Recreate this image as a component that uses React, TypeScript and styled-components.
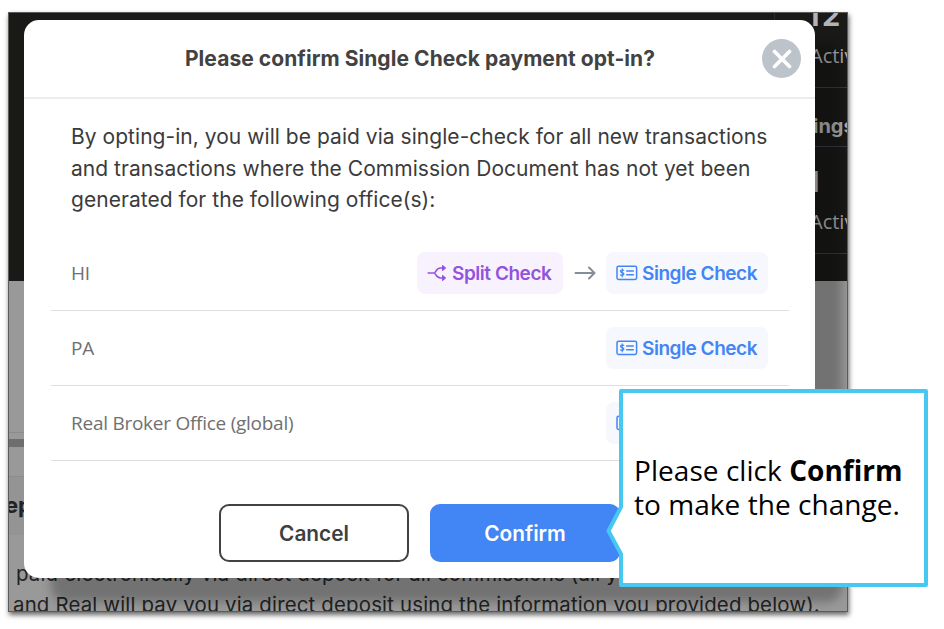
import React from "react";
import styled, { createGlobalStyle } from "styled-components";

const GlobalStyle = createGlobalStyle`
  * { box-sizing: border-box; }
  body { margin: 0; background: #fff; overflow: hidden; }
`;

const Canvas = styled.main`
  position: relative;
  width: 944px;
  height: 629px;
  padding: 12px 0 0 8px;
  overflow: hidden;
  font-family: Inter, "Liberation Sans", sans-serif;
`;

const Frame = styled.section`
  position: relative;
  width: 840px;
  height: 600px;
  border: 1px solid #5b5b59;
  overflow: hidden;
  background: #999;
`;

const FrameShadow = styled.div`
  width: 840px;
  height: 600px;
  box-shadow: 1px 3px 5px rgba(0, 0, 0, 0.6);
`;

const Hero = styled.div`
  display: flex;
  justify-content: flex-end;
  height: 268px;
  background: #191917;
`;

const Stats = styled.div`
  width: 73px;
  border-left: 1px solid #292a2b;
  font-family: "Open Sans", sans-serif;
  color: #b4b4b4;
`;

const StatCell = styled.div<{ $height: number }>`
  height: ${(p) => p.$height}px;
  padding-left: 35px;
  border-bottom: 1px solid #3a3a44;
  overflow: hidden;
  white-space: nowrap;
`;

const StatValue = styled.div<{ $top: number }>`
  margin-top: ${(p) => p.$top}px;
  margin-left: -3px;
  font-family: Inter, sans-serif;
  font-size: 29px;
  line-height: 38px;
  font-weight: 700;
  letter-spacing: 2.6px;
`;

const StatLabel = styled.div`
  padding-top: 4px;
  font-size: 20px;
  line-height: 34px;
`;

const StatHeading = styled.div`
  padding: 21px 0 0 3px;
  font-family: Inter, sans-serif;
  font-size: 20px;
  line-height: 34px;
  font-weight: 700;
`;

const Divider = styled.div<{ $gap: number }>`
  margin-top: ${(p) => p.$gap}px;
  height: 1px;
  background: #8b8b8b;
`;

const ScrollTrack = styled.div`
  margin-top: 6px;
  height: 8px;
  background: #6e6e6e;
`;

const SectionTitle = styled.div`
  height: 58px;
  margin-left: -4px;
  background: #949494;
  font-size: 22px;
  line-height: 57px;
  font-weight: 700;
  color: #222;
`;

const PageCopy = styled.div`
  padding-top: 23px;
  white-space: nowrap;
  font-size: 20.4px;
  line-height: 31px;
  letter-spacing: 0.18px;
  color: #222;
`;

const CopyLine = styled.div<{ $indent: number }>`
  padding-left: ${(p) => p.$indent}px;
`;

const Modal = styled.div`
  position: absolute;
  left: 15px;
  top: 7px;
  width: 791px;
  height: 557.5px;
  border-radius: 15px;
  background: #fff;
  box-shadow: 27px 24px 10px rgba(0, 0, 0, 0.25);
`;

const ModalHeader = styled.header`
  display: grid;
  grid-template-columns: 52px 1fr 39px;
  align-items: center;
  height: 79px;
  padding: 0 14px 0 0;
  border-bottom: 2px solid #ececec;
`;

const Title = styled.h1`
  grid-column: 2;
  margin: 0;
  padding-left: 2px;
  text-align: center;
  font-size: 21px;
  line-height: 30px;
  font-weight: 700;
  letter-spacing: 0.06px;
  white-space: nowrap;
  color: #424242;
`;

const CloseButton = styled.button`
  display: grid;
  place-items: center;
  width: 39px;
  height: 39px;
  padding: 0;
  border: 0;
  border-radius: 50%;
  background: #bdc3cb;
`;

const Intro = styled.p`
  margin: 22px 0 0 47px;
  font-size: 21px;
  line-height: 31.7px;
  letter-spacing: 0.04px;
  white-space: nowrap;
  color: #3b3b3b;
`;

const OfficeList = styled.div`
  margin: 20px 26px 0 27px;
`;

const OfficeRow = styled.div`
  display: flex;
  align-items: center;
  justify-content: space-between;
  height: 75.1px;
  padding: 0 21px 0 20px;
  border-bottom: 1px solid #dfdfdf;
`;

const OfficeName = styled.span`
  margin-top: -1px;
  font-family: "Open Sans", "Noto Sans", sans-serif;
  font-size: 19px;
  letter-spacing: -0.26px;
  color: #707070;
`;

const Change = styled.div`
  display: flex;
  align-items: center;
`;

const Tag = styled.span<{ $split?: boolean }>`
  display: flex;
  align-items: center;
  width: ${(p) => (p.$split ? 146 : 162)}px;
  height: 42px;
  padding-left: 10px;
  gap: ${(p) => (p.$split ? 5 : 4)}px;
  border-radius: 8px;
  background: ${(p) => (p.$split ? "#f8f2ff" : "#f6f8fd")};
  color: ${(p) => (p.$split ? "#9254dc" : "#4285f4")};
  font-size: 19px;
  font-weight: 600;
  letter-spacing: -0.46px;
  white-space: nowrap;
`;

const ArrowIcon = styled.svg`
  margin: 0 10px 0 11px;
`;

const Actions = styled.footer`
  display: flex;
  gap: 21px;
  margin: 43px 0 0 195px;
`;

const Action = styled.button<{ $primary?: boolean }>`
  width: 190px;
  height: 58px;
  padding: 0;
  border: ${(p) => (p.$primary ? "0" : "2.5px solid #424242")};
  border-radius: 10px;
  background: ${(p) => (p.$primary ? "#4285f4" : "#fff")};
  color: ${(p) => (p.$primary ? "#fff" : "#3f3f3f")};
  font: 600 20.8px Inter, sans-serif;
`;

const Callout = styled.aside`
  position: absolute;
  left: 606px;
  top: 389px;
  width: 322px;
  height: 198px;
  display: flex;
  align-items: center;
  padding: 0 0 2px 28px;
`;

const CalloutShape = styled.svg`
  position: absolute;
  inset: 0;
`;

const CalloutText = styled.p`
  position: relative;
  margin: 0;
  font-family: "Open Sans", sans-serif;
  font-size: 28px;
  line-height: 34px;
  letter-spacing: 0.05px;
  white-space: nowrap;
  color: #000;
`;

const CheckIcon = () => (
  <svg width="22" height="16" viewBox="0 0 22 16" fill="none" stroke="currentColor" strokeWidth="1.5" strokeLinecap="round">
    <rect x="1" y="1.2" width="19.6" height="13.2" rx="1.6" />
    <path d="M7.7 5.4C6.9 4.7 4.5 4.7 4.5 6.2C4.5 8 7.9 7.2 7.9 9.1C7.9 10.7 5.4 10.8 4.4 9.9M6.2 3.8V11.8" strokeWidth="1.2" />
    <path d="M10.7 6H17.3M10.7 9.8H17.3" />
  </svg>
);

const SplitIcon = () => (
  <svg width="20" height="18" viewBox="0 0 20 18" fill="none" stroke="currentColor" strokeWidth="1.6" strokeLinecap="round" strokeLinejoin="round">
    <path d="M1.2 9H7.2C8.6 9 9 4 13.6 4H16M7.2 9C8.6 9 9 14 13.6 14H16" />
    <path d="M15.6 1.6L18.4 4L15.6 6.4ZM15.6 11.6L18.4 14L15.6 16.4Z" fill="currentColor" strokeWidth="1.1" />
  </svg>
);

const SingleTag = () => (
  <Tag>
    <CheckIcon />
    Single Check
  </Tag>
);

export default function App() {
  return (
    <>
      <GlobalStyle />
      <Canvas>
        <FrameShadow>
          <Frame>
            <Hero>
              <Stats>
                <StatCell $height={75}>
                  <StatValue $top={-16}>12</StatValue>
                  <StatLabel>Active</StatLabel>
                </StatCell>
                <StatCell $height={59}>
                  <StatHeading>ings</StatHeading>
                </StatCell>
                <StatCell $height={107}>
                  <StatValue $top={16}>1</StatValue>
                  <StatLabel>Active</StatLabel>
                </StatCell>
              </Stats>
            </Hero>
            <Divider $gap={151} />
            <ScrollTrack />
            <Divider $gap={29} />
            <SectionTitle>ep</SectionTitle>
            <PageCopy>
              <CopyLine $indent={7}>
                paid electronically via direct deposit for all commissions (all your
              </CopyLine>
              <CopyLine $indent={4}>
                and Real will pay you via direct deposit using the information you provided below).
              </CopyLine>
            </PageCopy>
            <Modal>
              <ModalHeader>
                <Title>Please confirm Single Check payment opt-in?</Title>
                <CloseButton aria-label="Close">
                  <svg width="20" height="20" viewBox="0 0 20 20" stroke="#fff" strokeWidth="3.6" strokeLinecap="round">
                    <path d="M2.5 2.5L17.5 17.5M17.5 2.5L2.5 17.5" />
                  </svg>
                </CloseButton>
              </ModalHeader>
              <Intro>
                By opting-in, you will be paid via single-check for all new transactions
                <br />
                and transactions where the Commission Document has not yet been
                <br />
                generated for the following office(s):
              </Intro>
              <OfficeList>
                <OfficeRow>
                  <OfficeName>HI</OfficeName>
                  <Change>
                    <Tag $split>
                      <SplitIcon />
                      Split Check
                    </Tag>
                    <ArrowIcon width="22" height="14" viewBox="0 0 22 14" fill="none" stroke="#848d99" strokeWidth="2" strokeLinecap="round" strokeLinejoin="round">
                      <path d="M1.5 7H20.5M15 1.5L20.5 7L15 12.5" />
                    </ArrowIcon>
                    <SingleTag />
                  </Change>
                </OfficeRow>
                <OfficeRow>
                  <OfficeName>PA</OfficeName>
                  <SingleTag />
                </OfficeRow>
                <OfficeRow>
                  <OfficeName>Real Broker Office (global)</OfficeName>
                  <SingleTag />
                </OfficeRow>
              </OfficeList>
              <Actions>
                <Action>Cancel</Action>
                <Action $primary>Confirm</Action>
              </Actions>
            </Modal>
          </Frame>
        </FrameShadow>
        <Callout>
          <CalloutShape width="322" height="198" viewBox="0 0 322 198">
            <path d="M15 2H320V196H15V165L2.5 142L15 118Z" fill="#fff" stroke="#46c8f1" strokeWidth="4" strokeLinejoin="round" />
          </CalloutShape>
          <CalloutText>
            Please click <strong>Confirm</strong>
            <br />
            to make the change.
          </CalloutText>
        </Callout>
      </Canvas>
    </>
  );
}
